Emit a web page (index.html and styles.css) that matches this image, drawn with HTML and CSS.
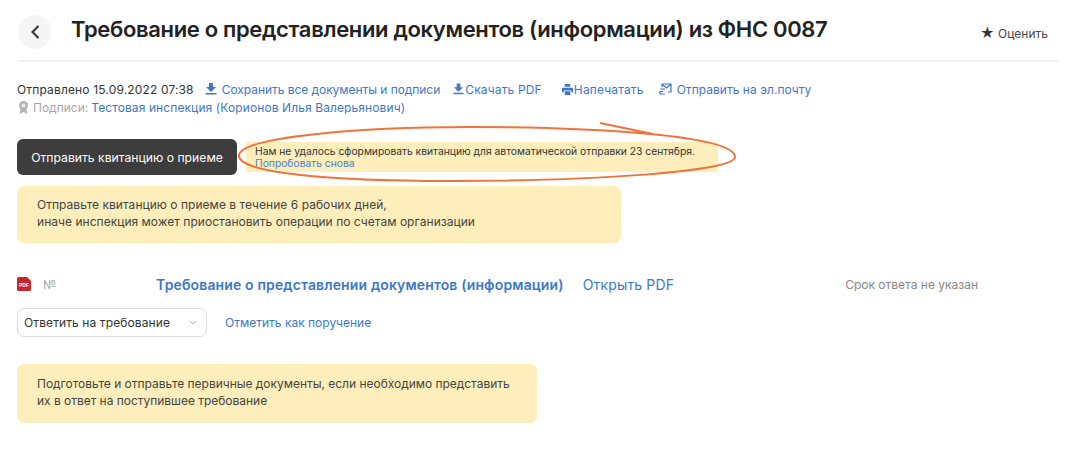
FILE: index.html
```html
<!DOCTYPE html>
<html lang="ru">
<head>
<meta charset="utf-8">
<title>Требование</title>
<link rel="stylesheet" href="styles.css">
</head>
<body>
<div class="page">
  <header class="head">
    <div class="back"><svg width="12" height="16" viewBox="0 0 12 16"><path d="M9.500 2 L3.500 8 L9.500 14" fill="none" stroke="#333" stroke-width="2"/></svg></div>
    <h1 class="title">Требование о представлении документов (информации) из ФНС 0087</h1>
    <div class="rate"><span class="star">★</span> Оценить</div>
  </header>
  <div class="meta">
    <div class="meta-row">
      <span class="sent">Отправлено 15.09.2022 07:38</span>
      <a class="link l1"><svg class="ic" width="12" height="12" viewBox="0 0 12 12"><path d="M4 0h4v4h3L6 9 1 4h3zM0.500 10h11v1.600H0.500z" fill="#3d78c9"/></svg>Сохранить все документы и подписи</a>
      <a class="link l2"><svg class="ic tight" width="11" height="12" viewBox="0 0 12 12"><path d="M4 0h4v4h3L6 9 1 4h3zM0.500 10h11v1.600H0.500z" fill="#3d78c9"/></svg>Скачать PDF</a>
      <a class="link l3"><svg class="ic tight" width="11" height="11" viewBox="0 0 12 12"><path d="M3 0h6v3H3zM1 4h10a1 1 0 0 1 1 1v4h-2V7H2v2H0V5a1 1 0 0 1 1-1zM3 8h6v4H3z" fill="#3d78c9"/></svg>Напечатать</a>
      <a class="link l4"><svg class="ic" width="13" height="12" viewBox="0 0 13 12"><path d="M3 4V1h9v8H9M3 1l4.500 4L12 1M1 6h5M4 8.500H1V11h5" fill="none" stroke="#3d78c9" stroke-width="1.200"/></svg>Отправить на эл.почту</a>
    </div>
    <div class="meta-row">
      <svg class="seal" width="11" height="13" viewBox="0 0 11 13"><circle cx="5.500" cy="4.500" r="4.500" fill="#b5b5b5"/><circle cx="5.500" cy="4.500" r="2" fill="#e8e8e8"/><path d="M2.500 8l-1 5 4-2 4 2-1-5z" fill="#b5b5b5"/></svg>
      <span class="muted">Подписи:</span> <a class="link sign">Тестовая инспекция (Корионов Илья Валерьянович)</a>
    </div>
  </div>
  <div class="action">
    <button class="btn">Отправить квитанцию о приеме</button>
    <div class="fail">
      <div class="fail-text">Нам не удалось сформировать квитанцию для автоматической отправки 23 сентября.</div>
      <a class="link fail-link">Попробовать снова</a>
    </div>
    <svg class="mark" width="510" height="70" viewBox="237 120 510 70"><path d="M239 155 C 242 137, 360 127, 470 127 C 590 127, 735 135, 735 157 C 735 172, 590 181, 450 181 C 330 181, 236 173, 239 155 Z M600 123 L653 134" fill="none" stroke="#f0743a" stroke-width="2"/></svg>
  </div>
  <div class="note first">Отправьте квитанцию о приеме в течение 6 рабочих дней,<br>иначе инспекция может приостановить операции по счетам организации</div>
  <div class="doc-row">
    <svg class="pdf" width="14" height="14" viewBox="0 0 14 14"><path d="M1.500 0H10l4 4v8.500A1.500 1.500 0 0 1 12.500 14h-11A1.500 1.500 0 0 1 0 12.500v-11A1.500 1.500 0 0 1 1.500 0z" fill="#c9252f"/><text class="pdf-label" x="7" y="10">PDF</text></svg>
    <span class="num">№</span>
    <a class="link doc-title">Требование о представлении документов (информации)</a>
    <a class="link open">Открыть PDF</a>
    <span class="due">Срок ответа не указан</span>
  </div>
  <div class="reply-row">
    <div class="select">Ответить на требование<svg width="8" height="5" viewBox="0 0 10 6"><path d="M1 1l4 4 4-4" fill="none" stroke="#aaa" stroke-width="1.200"/></svg></div>
    <a class="link mark-link">Отметить как поручение</a>
  </div>
  <div class="note second-note">Подготовьте и отправьте первичные документы, если необходимо представить<br>их в ответ на поступившее требование</div>
</div>
</body>
</html>
```
FILE: styles.css
```css
* { box-sizing: border-box; }
html, body { margin: 0; padding: 0; background: #fff; }
body { font-family: Inter, "Noto Sans", sans-serif; color: #333; font-size: 12px; overflow: hidden; }
.page { width: 1080px; height: 451px; padding: 0 22px 0 17px; }
.head { display: flex; align-items: flex-start; height: 62px; padding-top: 15px; border-bottom: 2px solid #f2f2f2; margin-left: 1px; }
.back { width: 34px; height: 34px; border-radius: 50%; background: #f5f5f5; display: flex; align-items: center; justify-content: center; flex: none; }
.title { margin: 0 0 0 19px; font-size: 22px; line-height: 28px; font-weight: 600; color: #222; white-space: nowrap; letter-spacing: -0.34px; flex: 1; }
.rate { font-size: 12px; line-height: 16px; margin: 10px 10px 0 0; color: #444; }
.star { color: #333; font-size: 14px; }
.meta { margin-top: 18px; }
.meta-row { display: flex; align-items: center; height: 18px; white-space: nowrap; }
.sent { color: #333; letter-spacing: 0.15px; }
.link { color: #3d78c9; display: inline-flex; align-items: center; }
.ic { margin-right: 5px; flex: none; }
.ic.tight { margin-right: 1px; }
.l1 { margin-left: 11px; letter-spacing: -0.05px; }
.l2 { margin-left: 13px; letter-spacing: 0.15px; }
.l3 { margin-left: 20px; letter-spacing: 0.15px; }
.l4 { margin-left: 15px; letter-spacing: 0.03px; }
.sign { letter-spacing: 0.1px; }
.seal { margin-right: 4px; margin-left: 1px; }
.muted { color: #a6a6a6; margin-right: 3px; }
.action { position: relative; display: flex; align-items: flex-start; margin-top: 23px; height: 36px; }
.btn { width: 220px; height: 36px; background: #3d3d3d; color: #fff; border: 0; border-radius: 6px; font: 400 12.200px Inter, sans-serif; padding: 0; }
.fail { margin: 3px 0 0 9px; width: 472px; height: 30px; background: #fdeebb; padding: 3px 9px; font-size: 10.300px; line-height: 12px; }
.fail-text { color: #333; white-space: nowrap; }
.fail-link { color: #4a7fd4; }
.mark { position: absolute; left: 220px; top: -19px; overflow: visible; }
.note { background: #fdeebb; border-radius: 7px; font-size: 12px; line-height: 17px; color: #444; }
.first { width: 604px; height: 57px; margin-top: 11px; padding: 10px 20px; letter-spacing: 0.03px; }
.doc-row { display: flex; align-items: center; height: 18px; margin-top: 32px; white-space: nowrap; }
.pdf { flex: none; }
.pdf-label { fill: #fff; font: 700 5px "Liberation Sans", sans-serif; text-anchor: middle; }
.num { color: #aaa; margin-left: 12px; font-size: 12px; }
.doc-title { font-size: 14px; font-weight: 600; margin-left: 100px; letter-spacing: 0.14px; }
.open { font-size: 14px; margin-left: 19px; letter-spacing: 0.16px; }
.due { margin-left: 171px; color: #888; }
.reply-row { display: flex; align-items: center; margin-top: 15px; height: 29px; }
.select { width: 190px; height: 29px; border: 1px solid #ddd; border-radius: 7px; display: flex; align-items: center; justify-content: space-between; padding: 0 9px 0 6px; color: #333; letter-spacing: 0.1px; }
.mark-link { margin-left: 18px; }
.second-note { width: 520px; height: 59px; margin-top: 27px; padding: 11px 20px; letter-spacing: -0.025px; }
```
